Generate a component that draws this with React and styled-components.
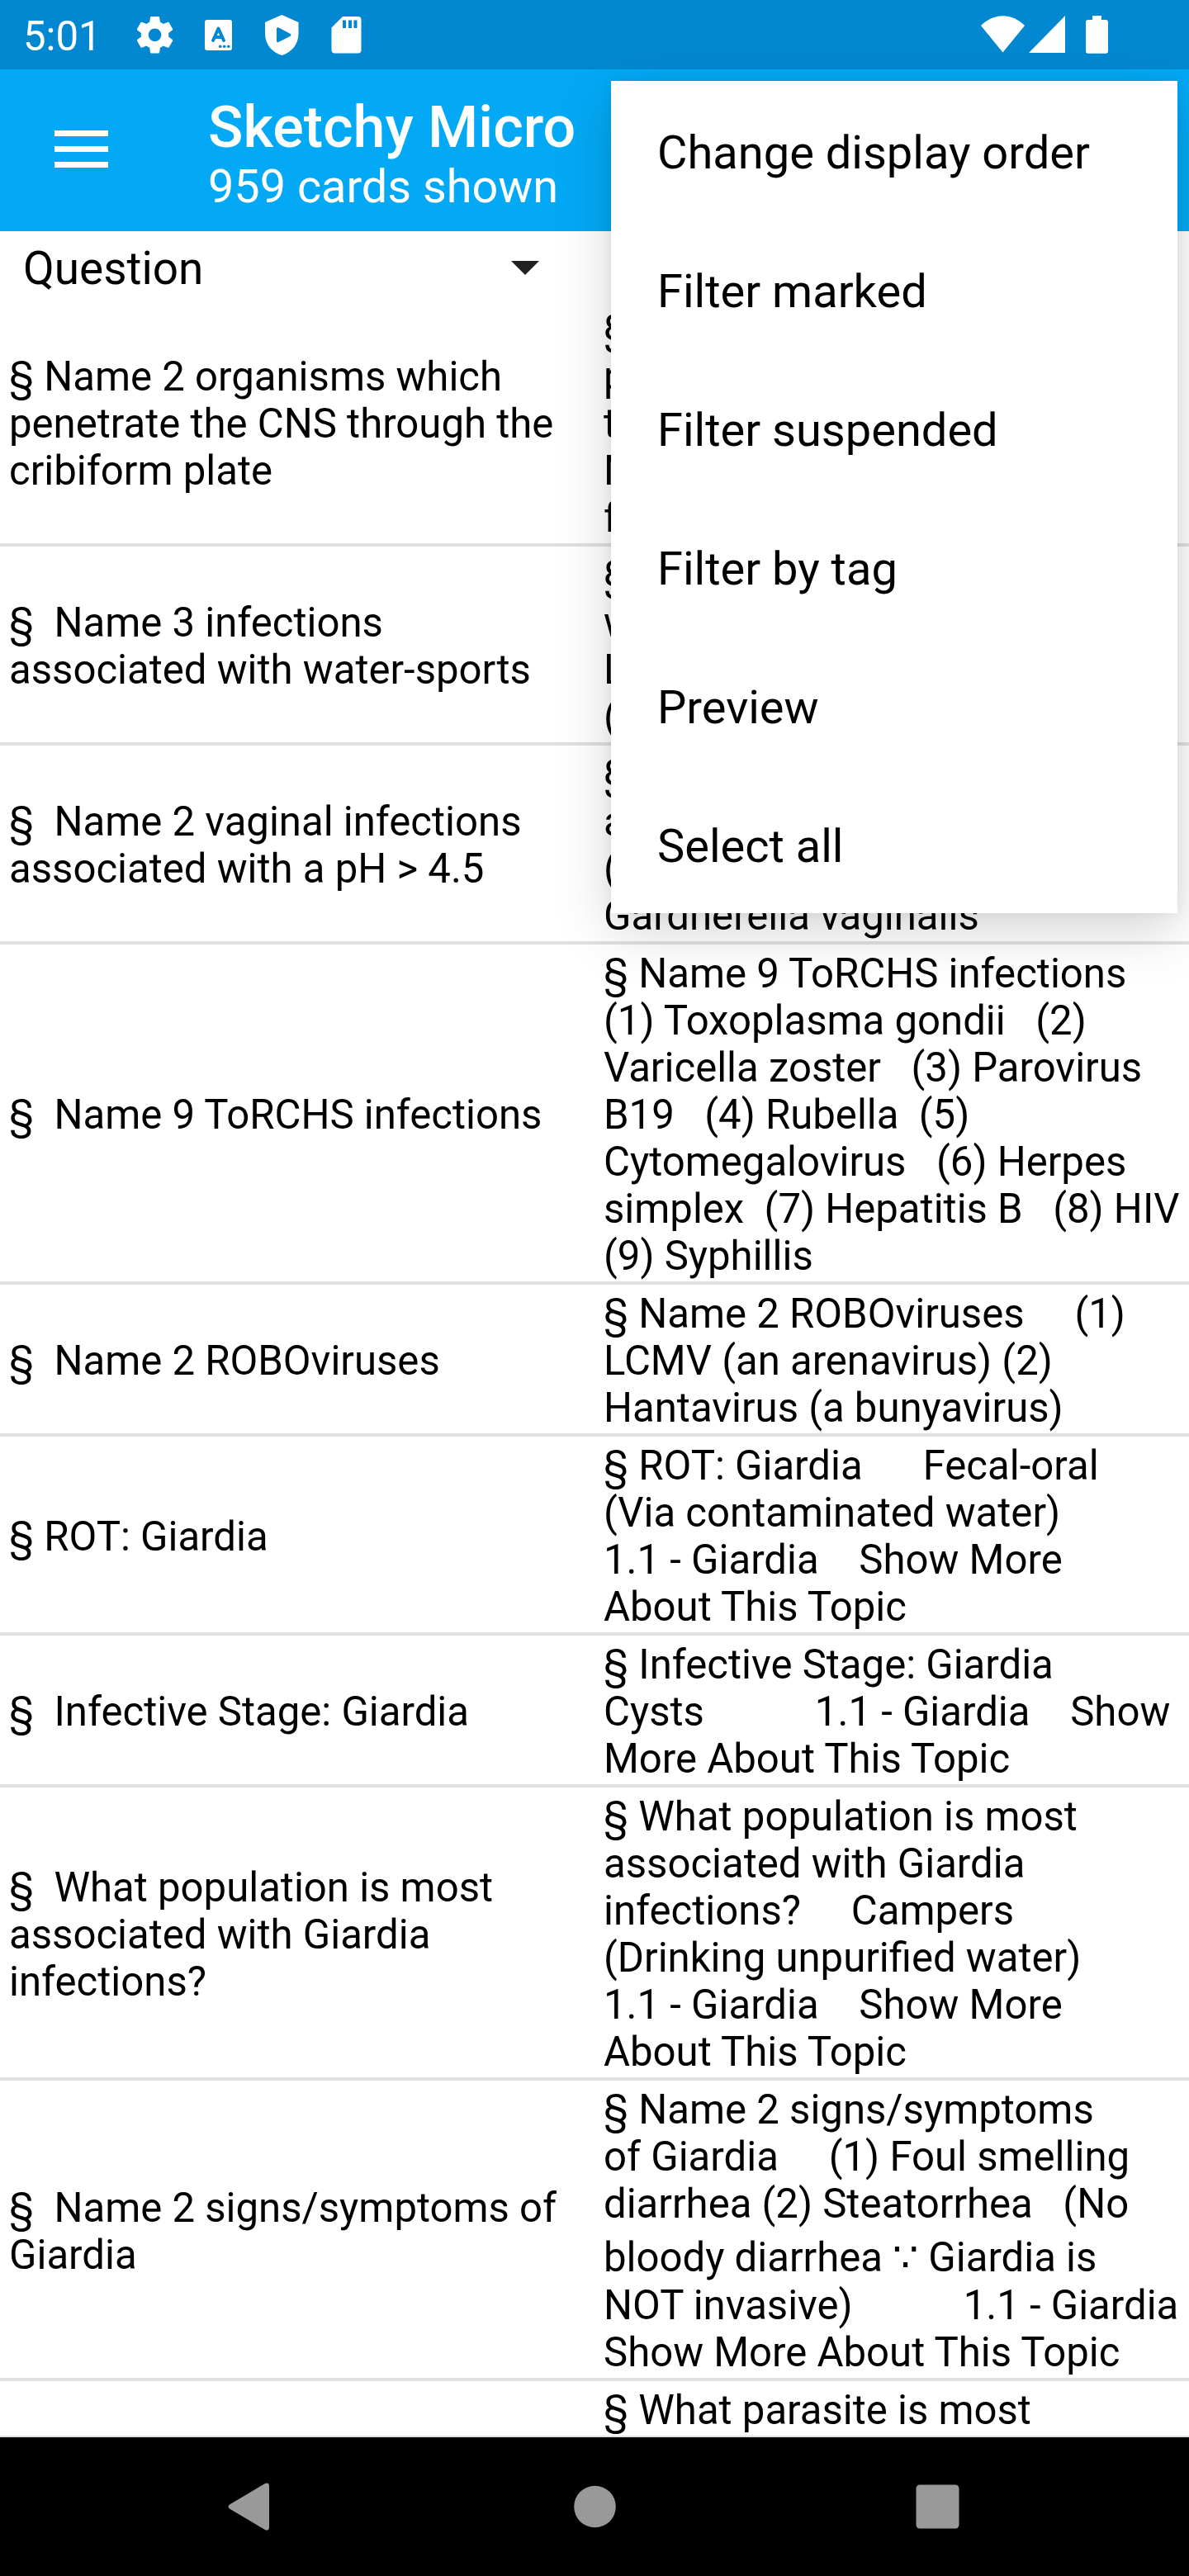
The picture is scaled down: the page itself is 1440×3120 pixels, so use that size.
import React from "react";
import styled, { createGlobalStyle } from "styled-components";

const GlobalStyle = createGlobalStyle`
  * { box-sizing: border-box; }
  html, body { margin: 0; padding: 0; background: #fff; }
`;

const Screen = styled.div`
  position: relative;
  display: flex;
  flex-direction: column;
  width: 1440px;
  height: 3120px;
  overflow: hidden;
  background: #fff;
  color: #000;
  font-family: Roboto, "Noto Sans", sans-serif;
  font-size: 49.1px;
`;

const StatusBar = styled.header`
  flex: none;
  display: flex;
  align-items: center;
  justify-content: space-between;
  height: 84px;
  padding: 0 98px 0 28px;
  background: #0288d1;
  color: #fff;
`;

const StatusGroup = styled.div`
  display: flex;
  align-items: center;
`;

const Clock = styled.time`
  width: 138px;
  padding-top: 5px;
  line-height: 57px;
`;

const StatusGlyph = styled.svg`
  display: block;
  width: ${(p) => p.$w}px;
  height: 84px;
  margin-right: ${(p) => p.$gap || 0}px;
  fill: #fff;
`;

const Toolbar = styled.div`
  flex: none;
  display: flex;
  align-items: center;
  height: 196px;
  padding-left: 66px;
  background: #03a9f4;
  color: #fff;
`;

const MenuButton = styled.div`
  display: flex;
  flex-direction: column;
  gap: 12px;
  width: 186px;
  margin-bottom: 3px;
`;

const MenuBar = styled.span`
  width: 65px;
  height: 7px;
  background: #fff;
`;

const Titles = styled.div`
  padding-top: 10px;
`;

const Title = styled.h1`
  margin: 0;
  font-size: 70px;
  font-weight: 500;
  line-height: 78px;
`;

const Subtitle = styled.div`
  font-size: 55.8px;
  line-height: 66px;
`;

const ColumnPicker = styled.div`
  flex: none;
  display: flex;
  align-items: center;
  justify-content: space-between;
  width: 720px;
  height: 84px;
  padding: 5px 67px 0 28px;
  font-size: 54.9px;
  line-height: 66px;
`;

const Caret = styled.svg`
  width: 34px;
  height: 17px;
  fill: #212121;
`;

const CardList = styled.main`
  flex: 1;
  min-height: 0;
  overflow: hidden;
`;

const CardRow = styled.div`
  display: grid;
  grid-template-columns: 720px 720px;
  align-items: center;
  border-bottom: 4px solid #e0e0e0;
`;

const Cell = styled.div`
  padding: 7px 0 2px 11px;
  white-space: pre;
`;

const Line = styled.div`
  height: ${(p) => (p.$tall ? 66 : 57)}px;
  padding-top: ${(p) => (p.$tall ? 8 : 0)}px;
  line-height: 57px;
`;

const Popup = styled.nav`
  position: absolute;
  top: 98px;
  left: 740px;
  width: 686px;
  background: #fff;
  box-shadow: 0 21px 64px rgba(0, 0, 0, 0.17), 0 0 14px rgba(0, 0, 0, 0.06);
`;

const PopupItem = styled.div`
  display: flex;
  align-items: center;
  height: 168px;
  padding: 5px 56px 0;
  font-size: 56px;
  line-height: 66px;
`;

const NavBar = styled.footer`
  flex: none;
  display: flex;
  align-items: center;
  height: 168px;
  background: #000;
`;

const NavGlyph = styled.svg`
  width: ${(p) => p.$w}px;
  height: 58px;
  margin-left: ${(p) => p.$before}px;
  fill: #999;
`;

const cards = [
  {
    q: ["§ Name 2 organisms which", "penetrate the CNS through the", "cribiform plate"],
    a: ["§ Name 2 organisms which", "penetrate the CNS through", "the cribiform plate     (1)", "Naegleria fowleri (2)", "fungus Mucor"],
  },
  {
    q: ["§  Name 3 infections", "associated with water-sports"],
    a: ["§ Name 3 infections associated", "with water-sports     (1)", "Leptospirosis (2) Naegleria", "(3) Schistosoma"],
  },
  {
    q: ["§  Name 2 vaginal infections", "associated with a pH > 4.5"],
    a: ["§ Name 2 vaginal infections", "associated with a pH > 4.5", "(1) Trichomonas (2)", "Gardnerella vaginalis"],
  },
  {
    q: ["§  Name 9 ToRCHS infections"],
    a: [
      "§ Name 9 ToRCHS infections",
      "(1) Toxoplasma gondii   (2)",
      "Varicella zoster   (3) Parovirus",
      "B19   (4) Rubella  (5)",
      "Cytomegalovirus   (6) Herpes",
      "simplex  (7) Hepatitis B   (8) HIV",
      "(9) Syphillis",
    ],
  },
  {
    q: ["§  Name 2 ROBOviruses"],
    a: ["§ Name 2 ROBOviruses     (1)", "LCMV (an arenavirus) (2)", "Hantavirus (a bunyavirus)"],
  },
  {
    q: ["§ ROT: Giardia"],
    a: ["§ ROT: Giardia      Fecal-oral", "(Via contaminated water)", "1.1 - Giardia    Show More", "About This Topic"],
  },
  {
    q: ["§  Infective Stage: Giardia"],
    a: ["§ Infective Stage: Giardia", "Cysts           1.1 - Giardia    Show", "More About This Topic"],
  },
  {
    q: ["§  What population is most", "associated with Giardia", "infections?"],
    a: [
      "§ What population is most",
      "associated with Giardia",
      "infections?     Campers",
      "(Drinking unpurified water)",
      "1.1 - Giardia    Show More",
      "About This Topic",
    ],
  },
  {
    q: ["§  Name 2 signs/symptoms of", "Giardia"],
    a: [
      "§ Name 2 signs/symptoms",
      "of Giardia     (1) Foul smelling",
      "diarrhea (2) Steatorrhea   (No",
      "bloody diarrhea ∵ Giardia is",
      "NOT invasive)           1.1 - Giardia",
      "Show More About This Topic",
    ],
  },
  { q: [], a: ["§ What parasite is most"] },
];

const menuItems = [
  "Change display order",
  "Filter marked",
  "Filter suspended",
  "Filter by tag",
  "Preview",
  "Select all",
];

const Lines = ({ text }) =>
  text.map((line) => (
    <Line key={line} $tall={line.includes("∵")}>
      {line}
    </Line>
  ));

export default function App() {
  return (
    <Screen>
      <GlobalStyle />
      <StatusBar>
        <StatusGroup>
          <Clock>5:01</Clock>
          <StatusGlyph $w={44} $gap={38} viewBox="166 0 44 84">
            <path
              transform="translate(160.8 15.5) scale(2.23)"
              d="M19.43 12.98c.04-.32.07-.64.07-.98s-.03-.66-.07-.98l2.11-1.65c.19-.15.24-.42.12-.64l-2-3.46c-.12-.22-.39-.3-.61-.22l-2.49 1c-.52-.4-1.08-.73-1.69-.98l-.38-2.65C14.46 2.18 14.25 2 14 2h-4c-.25 0-.46.18-.49.42l-.38 2.65c-.61.25-1.17.59-1.69.98l-2.49-1c-.23-.09-.49 0-.61.22l-2 3.46c-.13.22-.07.49.12.64l2.11 1.65c-.04.32-.07.65-.07.98s.03.66.07.98l-2.11 1.65c-.19.15-.24.42-.12.64l2 3.46c.12.22.39.3.61.22l2.49-1c.52.4 1.08.73 1.69.98l.38 2.65c.03.24.24.42.49.42h4c.25 0 .46-.18.49-.42l.38-2.65c.61-.25 1.17-.59 1.69-.98l2.49 1c.23.09.49 0 .61-.22l2-3.46c.12-.22.07-.49-.12-.64l-2.11-1.65zM12 15.5c-1.93 0-3.5-1.57-3.5-3.5s1.57-3.5 3.5-3.5 3.5 1.57 3.5 3.5-1.57 3.5-3.5 3.5z"
            />
          </StatusGlyph>
          <StatusGlyph $w={33} $gap={40} viewBox="248 0 33 84">
            <rect x="248" y="24" width="33" height="37" rx="3" />
            <path d="M258 49L264.500 34.500L271 49M260.500 45H268.500" fill="none" stroke="#0288d1" strokeWidth="3.9" strokeLinecap="round" strokeLinejoin="round" />
            <g fill="#0288d1">
              <circle cx="266.700" cy="56.200" r="1.800" />
              <circle cx="271.700" cy="56.200" r="1.800" />
              <circle cx="276.700" cy="56.200" r="1.800" />
            </g>
          </StatusGlyph>
          <StatusGlyph $w={41} $gap={39} viewBox="321 0 41 84">
            <path d="M341.300 18L361.500 27V41C361.500 53 353 64 341.300 67C329.500 64 321 53 321 41V27Z" />
            <path d="M336.500 34.700V49.700L351 42.300Z" fill="#0288d1" stroke="#0288d1" strokeWidth="3" strokeLinejoin="round" />
          </StatusGlyph>
          <StatusGlyph $w={37} viewBox="400 0 37 84">
            <path fillRule="evenodd" d="M414 20H432.500A4 4 0 0 1 436.500 24V60.500A4 4 0 0 1 432.500 64.500H404.500A4 4 0 0 1 400.500 60.500V33.500ZM414 24.500V34H418V24.500ZM421 24.500V34H425V24.500ZM427.500 24.500V34H431.500V24.500Z" />
          </StatusGlyph>
        </StatusGroup>
        <StatusGroup>
          <StatusGlyph $w={53} $gap={5} viewBox="1188 0 53 84">
            <path d="M1188 31C1203 15.200 1226 15.200 1241 31L1214.500 63.500Z" />
          </StatusGlyph>
          <StatusGlyph $w={44} $gap={25} viewBox="1246 0 44 84">
            <path d="M1290 19V64H1246Z" />
          </StatusGlyph>
          <StatusGlyph $w={27} viewBox="1315 0 27 84">
            <path d="M1323 19H1334V24H1339.500A2.700 2.700 0 0 1 1342 26.700V62A2.700 2.700 0 0 1 1339.300 64.700H1317.700A2.700 2.700 0 0 1 1315 62V26.700A2.700 2.700 0 0 1 1317.700 24H1323Z" />
          </StatusGlyph>
        </StatusGroup>
      </StatusBar>
      <Toolbar>
        <MenuButton>
          <MenuBar />
          <MenuBar />
          <MenuBar />
        </MenuButton>
        <Titles>
          <Title>Sketchy Micro</Title>
          <Subtitle>959 cards shown</Subtitle>
        </Titles>
      </Toolbar>
      <ColumnPicker>
        Question
        <Caret viewBox="0 0 34 17">
          <path d="M0 0H34L17 17Z" />
        </Caret>
      </ColumnPicker>
      <CardList>
        {cards.map((card) => (
          <CardRow key={card.a[0]}>
            <Cell>
              <Lines text={card.q} />
            </Cell>
            <Cell>
              <Lines text={card.a} />
            </Cell>
          </CardRow>
        ))}
      </CardList>
      <NavBar>
        <NavGlyph $w={50} $before={275.5} viewBox="0 0 50 58">
          <path d="M44.500 1.300Q50 -1.500 50 4.500V53.500Q50 59.500 44.500 56.700L2 31.500Q-1 29 2 26.500Z" />
        </NavGlyph>
        <NavGlyph $w={51} $before={369} viewBox="0 0 51 58">
          <circle cx="25.500" cy="29" r="25.300" />
        </NavGlyph>
        <NavGlyph $w={53} $before={363} viewBox="0 0 53 58">
          <rect x="0.500" y="2.500" width="52" height="53" rx="4.500" />
        </NavGlyph>
      </NavBar>
      <Popup>
        {menuItems.map((item) => (
          <PopupItem key={item}>{item}</PopupItem>
        ))}
      </Popup>
    </Screen>
  );
}
